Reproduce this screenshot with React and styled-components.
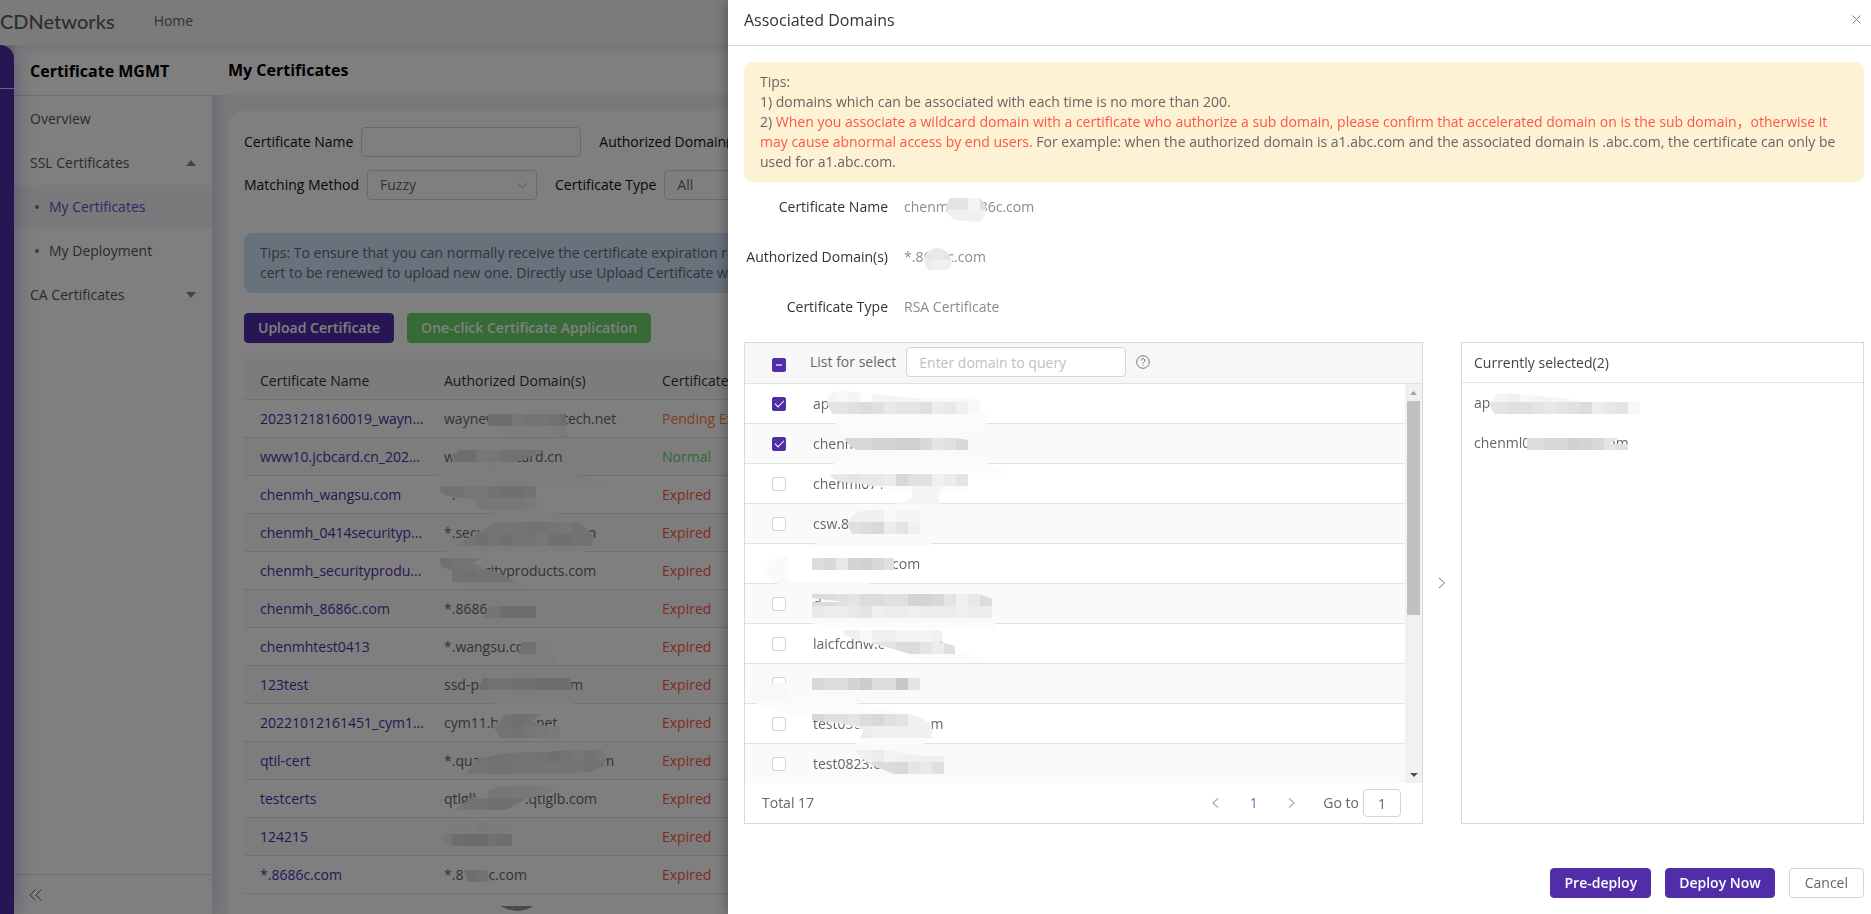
import React, { useEffect, useId, useRef } from "react";
import styled, { createGlobalStyle } from "styled-components";

const GlobalStyle = createGlobalStyle`
  *,
  *::before,
  *::after {
    box-sizing: border-box;
  }
  body {
    margin: 0;
    overflow: hidden;
    background-color: #f3f3f8;
  }
  body,
  button,
  input,
  select {
    font-family: "Open Sans", "Noto Sans CJK SC", sans-serif;
    font-size: 14px;
    line-height: 20px;
    color: #666666;
  }
`;

/* ---------- page behind the drawer ---------- */

const Page = styled.div`
  height: 100vh;
  display: flex;
  flex-direction: column;
  overflow: hidden;
`;

const TopBar = styled.header`
  height: 45px;
  flex: none;
  display: flex;
  align-items: center;
  gap: 39px;
  padding-bottom: 4px;
  background-color: #f7f7f9;
  box-shadow: 0 2px 12px rgba(0, 0, 0, 0.12);
  position: relative;
  z-index: 2;
`;

const Logo = styled.a`
  font-family: Lato, sans-serif;
  font-size: 20px;
  font-weight: 500;
  line-height: 24px;
  color: #5c5c5c;
  text-decoration: none;
`;

const TopLink = styled.a`
  color: #666666;
  text-decoration: none;
`;

const Columns = styled.div`
  flex: 1;
  min-height: 0;
  display: flex;
`;

const Rail = styled.div`
  width: 14px;
  flex: none;
  padding-top: 43px;
  background-color: #512da8;
  border-radius: 0 14px 0 0;
  box-shadow: 0 0 20px rgba(81, 45, 168, 0.45);
  position: relative;
  z-index: 1;
`;

const RailLine = styled.div`
  height: 1px;
  background-color: #d8cfee;
`;

const Sidebar = styled.aside`
  width: 198px;
  flex: none;
  display: flex;
  flex-direction: column;
  background-color: #ffffff;
  box-shadow: 0 0 20px rgba(60, 40, 100, 0.22);
`;

const SidebarTitle = styled.h2`
  height: 51px;
  margin: 0;
  padding: 0 16px;
  border-bottom: 1px solid #dcdcdc;
  font-size: 16px;
  font-weight: 700;
  line-height: 52px;
  color: #000000;
`;

const Menu = styled.ul`
  flex: 1;
  list-style: none;
  margin: 0;
  padding: 1px 0 0;
`;

const MenuLink = styled.a`
  height: 44px;
  display: flex;
  align-items: center;
  justify-content: space-between;
  padding: 0 16px;
  color: #555555;
  text-decoration: none;
`;

const SubMenuLink = styled.a`
  height: 44px;
  display: flex;
  align-items: center;
  gap: 10px;
  padding-left: 21px;
  color: ${(props) => (props.$active ? "#6a4bc4" : "#555555")};
  background-color: ${(props) => (props.$active ? "#f4f3f9" : "transparent")};
  text-decoration: none;

  &::before {
    content: "";
    width: 4px;
    height: 4px;
    border-radius: 50%;
    background-color: #777777;
  }
`;

const Collapse = styled.button`
  height: 40px;
  padding: 2px 0 0 15px;
  border: 0;
  border-top: 1px solid #dcdcdc;
  background: none;
  text-align: left;
`;

const Main = styled.main`
  flex: 1;
  min-width: 0;
  display: flex;
  flex-direction: column;
`;

const MainTitle = styled.h1`
  height: 50px;
  flex: none;
  margin: 0;
  padding: 0 16px;
  background-color: #ffffff;
  font-size: 16px;
  font-weight: 700;
  line-height: 50px;
  color: #000000;
`;

const Card = styled.section`
  flex: 1;
  min-height: 0;
  margin: 16px 16px 0;
  padding: 16px;
  border-radius: 16px 16px 0 0;
  background-color: #ffffff;
  overflow: hidden;
`;

const Filters = styled.form`
  display: flex;
  flex-direction: column;
  gap: 13px;
`;

const FilterRow = styled.div`
  display: flex;
  gap: 18px;
`;

const Field = styled.label`
  display: flex;
  align-items: center;
  gap: 8px;
  color: #111111;
  white-space: nowrap;
`;

const TextBox = styled.input`
  width: 220px;
  height: 30px;
  padding: 0 12px;
  border: 1px solid #d5d5d5;
  border-radius: 4px;
  background-color: #ffffff;

  &::placeholder {
    color: #bfbfbf;
  }
`;

const SelectBox = styled.span`
  display: grid;
  align-items: center;

  > * {
    grid-area: 1 / 1;
  }
  > svg {
    justify-self: end;
    margin-right: 9px;
    pointer-events: none;
  }
`;

const Select = styled.select`
  width: 170px;
  height: 30px;
  padding: 0 12px;
  appearance: none;
  border: 1px solid #d5d5d5;
  border-radius: 4px;
  background-color: #ffffff;
`;

const BlueTips = styled.p`
  margin: 33px 0 20px;
  padding: 10px 16px;
  border-radius: 8px;
  background-color: #cfe4fb;
  white-space: nowrap;
  overflow: hidden;
`;

const Actions = styled.div`
  display: flex;
  gap: 13px;
  margin-bottom: 16px;
`;

const Button = styled.button`
  height: 30px;
  padding: 0 ${(props) => (props.$plain ? 15 : 13)}px;
  border: 1px solid ${(props) => (props.$plain ? "#d5d5d5" : props.$color || "#512da8")};
  border-radius: 4px;
  background-color: ${(props) => (props.$plain ? "#ffffff" : props.$color || "#512da8")};
  color: ${(props) => (props.$plain ? "#666666" : "#ffffff")};
  font-weight: ${(props) => (props.$plain ? 400 : 600)};
  line-height: 28px;
  white-space: nowrap;
  cursor: pointer;
`;

const Covered = styled.div`
  position: relative;
`;

const Table = styled.table`
  width: 100%;
  table-layout: fixed;
  border-collapse: separate;
  border-spacing: 0;

  th,
  td {
    height: 38px;
    padding: 0 0 0 16px;
    border-bottom: 1px solid #e2e2e2;
    text-align: left;
    font-weight: 400;
    white-space: nowrap;
  }
  th {
    height: 41px;
    padding-top: 3px;
    background-color: #f9f9f9;
    color: #333333;
  }
  tbody tr:nth-child(even) {
    background-color: #fbfbfb;
  }
  a {
    color: #512da8;
    text-decoration: none;
  }
`;

const Status = styled.span`
  color: ${(props) => props.$color};
`;

const Gap = styled.span`
  display: inline-block;
  width: ${(props) => props.$width}px;
`;

const Backdrop = styled.div`
  position: fixed;
  inset: 0;
  z-index: 10;
  background-color: rgba(0, 0, 0, 0.5);
`;

/* ---------- drawer ---------- */

const Drawer = styled.div`
  position: fixed;
  inset: 0 0 0 728px;
  z-index: 11;
  display: flex;
  flex-direction: column;
  background-color: #ffffff;
  box-shadow: -2px 0 12px rgba(0, 0, 0, 0.3);
`;

const DrawerHead = styled.header`
  height: 46px;
  flex: none;
  display: flex;
  align-items: center;
  justify-content: space-between;
  padding: 0 10px 6px 16px;
  border-bottom: 1px solid #d9d9d9;
`;

const DrawerTitle = styled.h2`
  margin: 0;
  font-size: 16px;
  font-weight: 400;
  line-height: 22px;
  color: #333333;
`;

const IconButton = styled.button`
  display: flex;
  align-items: center;
  justify-content: center;
  padding: 0;
  border: 0;
  background: none;
  cursor: pointer;
`;

const DrawerBody = styled.div`
  flex: 1;
  min-height: 0;
  padding: 16px 7px 0 16px;
`;

const Tips = styled.div`
  padding: 10px 16px;
  border-radius: 8px;
  background-color: #fef2d5;
`;

const Warning = styled.span`
  color: #ff5643;
`;

const Details = styled.dl`
  display: grid;
  grid-template-columns: 144px 1fr;
  grid-auto-rows: 50px;
  column-gap: 16px;
  margin: 0 0 10px;
  line-height: 50px;
`;

const Term = styled.dt`
  text-align: right;
  color: #333333;
`;

const Value = styled.dd`
  margin: 0;
  color: #8c8c8c;
  position: relative;
`;

const Transfer = styled.div`
  display: grid;
  grid-template-columns: minmax(0, 1fr) 38px 403px;
`;

const Panel = styled.section`
  display: flex;
  flex-direction: column;
  border: 1px solid #d9d9d9;
  position: relative;
`;

const ListHead = styled.div`
  height: 41px;
  display: flex;
  align-items: center;
  padding: 0 0 2px 27px;
  border-bottom: 1px solid #e2e2e2;
  background-color: #f7f7f7;
`;

const SearchLabel = styled.label`
  margin: 0 10px 0 24px;
`;

const SearchBox = styled(TextBox)`
  margin-right: 10px;
`;

const HeadCheck = styled.span`
  display: flex;
  padding-top: 6px;
`;

const Check = styled.input`
  appearance: none;
  width: 14px;
  height: 14px;
  flex: none;
  display: grid;
  place-items: center;
  margin: 0;
  border: 1px solid #d5d5d5;
  border-radius: 2px;
  background-color: #ffffff;

  &:checked,
  &:indeterminate {
    border-color: #512da8;
    background-color: #512da8;
  }
  &:checked::after {
    content: "";
    width: 5px;
    height: 9px;
    margin-bottom: 2px;
    border: solid #ffffff;
    border-width: 0 1px 1px 0;
    transform: rotate(45deg);
  }
  &:indeterminate::after {
    content: "";
    width: 6px;
    height: 2px;
    background-color: #b9abdc;
  }
`;

const ListBody = styled.div`
  display: flex;
`;

const Rows = styled.ul`
  flex: 1;
  list-style: none;
  margin: 0;
  padding: 0;
`;

const Row = styled.li`
  label {
    height: 40px;
    display: flex;
    align-items: center;
    gap: 27px;
    padding-left: 27px;
    border-bottom: 1px solid #e2e2e2;
  }
  &:nth-child(even) {
    background-color: #fafafa;
  }
  &:last-child label {
    height: 39px;
    border-bottom: 0;
  }
`;

const NoCheck = styled.span`
  width: 14px;
`;

const ScrollTrack = styled.div`
  width: 17px;
  display: flex;
  flex-direction: column;
  align-items: center;
  padding: 7px 0 6px;
  background-color: #f1f1f1;
`;

const ScrollThumb = styled.div`
  width: 13px;
  height: 214px;
  margin: 6px 0 auto;
  background-color: #c1c1c1;
`;

const ListFoot = styled.div`
  height: 40px;
  display: flex;
  align-items: center;
  padding: 0 21px 0 17px;
`;

const Pager = styled.nav`
  display: flex;
  align-items: center;
  margin-left: auto;
  gap: 29px;
  padding-right: 27px;
`;

const PageLink = styled.a`
  width: 9px;
  text-align: center;
  color: #7d5fc7;
  text-decoration: none;
`;

const GoTo = styled.label`
  display: flex;
  align-items: center;
  gap: 4px;
`;

const PageBox = styled.input`
  width: 38px;
  height: 28px;
  padding: 0;
  border: 1px solid #d5d5d5;
  border-radius: 4px;
  text-align: center;
`;

const Move = styled.div`
  display: flex;
  align-items: center;
  justify-content: center;
`;

const SelectedTitle = styled.h3`
  height: 40px;
  margin: 0;
  padding: 0 12px;
  border-bottom: 1px solid #e2e2e2;
  font-size: 14px;
  font-weight: 400;
  line-height: 40px;
  color: #444444;
`;

const SelectedItem = styled.div`
  height: 40px;
  padding: 0 12px;
  line-height: 40px;
`;

const DrawerFoot = styled.footer`
  display: flex;
  justify-content: flex-end;
  gap: 14px;
  padding: 16px 7px 16px 16px;
`;

/* ---------- small drawings ---------- */

const Chevron = ({ d, w = 8, h = 12, color = "#888888", stroke = 1 }) => (
  <svg width={w} height={h} viewBox={`0 0 ${w} ${h}`} fill="none" stroke={color} strokeWidth={stroke} aria-hidden="true">
    <path d={d} />
  </svg>
);

const Caret = ({ up, w = 10, h = 6, color = "#888888" }) => (
  <svg width={w} height={h} aria-hidden="true">
    <path d={up ? `M0 ${h}L${w / 2} 0L${w} ${h}Z` : `M0 0H${w}L${w / 2} ${h}Z`} fill={color} />
  </svg>
);

const HelpIcon = () => (
  <svg width="14" height="14" viewBox="0 0 14 14" fill="none" stroke="#777777" aria-label="Help">
    <circle cx="7" cy="7" r="6.3" />
    <path d="M5.1 5.5a1.9 1.9 0 1 1 2.8 1.7c-.6.3-.9.6-.9 1.3" />
    <path d="M7 9.6v1.1" />
  </svg>
);

const Cover = styled.svg`
  position: absolute;
  left: ${(props) => props.$left || 0}px;
  top: ${(props) => props.$top || 0}px;
  overflow: visible;
  pointer-events: none;
`;

const CELL = 12;
const gray = (c) => {
  const v = 192 + 4 * parseInt(c, 16);
  return `rgb(${v}, ${v}, ${v})`;
};

// Pixelated strokes hiding parts of domain names. Each band is
// [column, row, shades], one hex digit of lightness per cell.
const Mosaic = ({ strokes, ox = 0, oy = 0, left, top }) => {
  const id = useId();
  return (
    <Cover width="1" height="1" $left={left} $top={top} aria-hidden="true">
      {strokes.map(({ d, fill = "#fbfbfb", bands = [] }, i) => (
        <g key={i} clipPath={`url(#${id}-${i})`}>
          <clipPath id={`${id}-${i}`}>
            <path d={d} />
          </clipPath>
          <path d={d} fill={fill} />
          {bands.map(([col, row, shades]) =>
            [...shades].map((c, n) => (
              <rect
                key={`${row}-${n}`}
                x={ox + (col + n) * CELL}
                y={oy + row * CELL}
                width={CELL}
                height={CELL}
                fill={gray(c)}
                shapeRendering="crispEdges"
              />
            ))
          )}
        </g>
      ))}
    </Cover>
  );
};

const tableStrokes = [
  { d: "M244 55H321L323 67V78H268L256 70L244 67Z", bands: [[20, 4, "77baa97"], [25, 5, "ed"]] },
  { d: "M215 91H299L290 96L273 103L256 115H244V103H208L207 98Z", bands: [[17, 7, "77bb9889"], [20, 8, "e"]] },
  {
    d: "M194 116H333L360 124V127H292V139L300 151L314 155H250L236 149L212 139L196 133Z",
    bands: [[16, 10, "99bb9889"], [19, 11, "bcccd"]],
  },
  {
    d: "M252 163H335L349 175L348 187L340 193H202L209 187L225 179Z",
    bands: [[19, 13, "aaaa99ab9a"], [17, 14, "ba8a8aab8899"]],
  },
  {
    d: "M196 199H240L229 204L245 211L256 214L272 223L285 229H232L208 223V211L197 208Z",
    bands: [[16, 16, "8aab"], [17, 17, "989989"]],
  },
  { d: "M246 247H292V259L310 268H241L239 259Z", bands: [[19, 20, "aa777d"]] },
  { d: "M278 283H305L313 305H280L274 295Z", bands: [[22, 23, "88"]] },
  { d: "M238 319H326L329 331V345H250L262 331H235Z", bands: [[19, 26, "79988777"]] },
  { d: "M262 355H298L289 362L300 367H316V379H256L249 367Z", bands: [[20, 29, "b989a"], [20, 30, "9a9bcd"]] },
  {
    d: "M230 401L260 394L300 393L322 391H358L363 398L360 407L345 413L310 415H223Z",
    bands: [[18, 32, "9999aa98ab9b"], [18, 33, "aa99aaaaaa999"]],
  },
  {
    d: "M256 427H316V432L290 438L276 443L262 451H209L226 440Z",
    bands: [[20, 35, "bbccde"], [17, 36, "b99888"]],
  },
  { d: "M205 463H270V487H206L199 480L202 470Z", bands: [[16, 38, "eeedee"], [16, 39, "b76687"]] },
  { d: "M220 511H244V518L250 523H224Z", bands: [[18, 42, "79d"]] },
  { d: "M256 547H290Q273 557 256 547", fill: "#969696" },
];

const listStrokes = [
  {
    d: "M83 58Q90 46 100 49L130 52L170 56H224L236 60V72L245 72L242 83H92L90 73Q83 66 83 58Z",
    bands: [[6, 4, "dedfddddeeeeef"], [6, 5, "99878a998bace"]],
  },
  { d: "M100 96H212L224 98V108H112Q104 103 100 96Z", bands: [[7, 8, "66655446986"]] },
  { d: "M90 120H240L265 131H86Z" },
  {
    d: "M86 132H224V148H150L118 142L98 140Q88 138 86 132Z",
    bands: [[6, 11, "aa9aab688cb9"]],
  },
  { d: "M152 162L168 156V144H200L195 150V162Z", fill: "#f5f5f5" },
  { d: "M104 180Q110 168 126 168H176V192H108Q104 186 104 180Z", bands: [[8, 14, "cccedd"], [8, 15, "876b9c"]] },
  { d: "M64 204L90 195H187V204Z", fill: "#f9f9f9" },
  { d: "M20 230Q24 215 44 213V240H30Z", fill: "#fafafa" },
  { d: "M68 216H150V228H68Z", bands: [[5, 18, "76a5468"]] },
  { d: "M28 240H120L170 252H68Z", fill: "#f9f9f9" },
  {
    d: "M68 252H235L248 257V276H68V260L100 260L68 256Z",
    bands: [[5, 21, "778977885569ca7"], [5, 22, "abba9cbbcbbbcbb"]],
  },
  { d: "M66 281L90 286H240L250 287L251 281Z" },
  {
    d: "M98 288H197Q201 296 196 300L211 304V312H166L142 305L112 298Q100 294 98 288Z",
    bands: [[7, 24, "cceccdddcd"], [10, 25, "99779b8e"]],
  },
  { d: "M150 309L165 312L225 312L247 321H188Z" },
  { d: "M68 336H176V348H68Z", bands: [[5, 28, "677537729"]] },
  { d: "M4 350Q10 344 30 341H44V360H10Z", fill: "#f8f8f8" },
  { d: "M10 361H112L165 372L68 372H44Z", fill: "#fcfcfc" },
  {
    d: "M68 372H165Q182 376 188 384L188 397L180 402H112L120 388L100 382L68 378Z",
    bands: [[5, 31, "68897689cc"], [9, 32, "bcccccdd"]],
  },
  {
    d: "M112 408H150Q160 414 200 414V432H150L130 424Q114 416 112 408Z",
    bands: [[8, 34, "bcbdcccc"], [9, 35, "97769a86"]],
  },
];

const selectedStrokes = [
  {
    d: "M30 60Q32 51 44 51L100 56L130 60H179V72H34Q28 66 30 60Z",
    bands: [[1, 4, "ddceddde"], [1, 5, "99889a987ba9e"]],
  },
  { d: "M66 96H158L148 102H167V108H66Z", bands: [[4, 8, "776645698"]] },
];

const nameStrokes = [{ d: "M46 16H76Q84 24 81 34L76 40L52 38Q36 30 46 16Z", bands: [[3, 1, "99d88"], [3, 2, "cccdf"]] }];
const domainStrokes = [{ d: "M20 26Q24 16 34 16Q44 17 48 29Q47 35 43 38H25Q20 34 20 26Z", bands: [[1, 1, "aa9a"], [1, 2, "bccc"]] }];

/* ---------- data ---------- */

const EXPIRED = ["Expired", "#ff5643"];

const certificates = [
  { name: "20231218160019_wayn...", domain: ["waynew", 66, "tech.net"], status: ["Pending Expiration", "#ff7d3c"] },
  { name: "www10.jcbcard.cn_202...", domain: ["w", 60, "card.cn"], status: ["Normal", "#62cc6a"] },
  { name: "chenmh_wangsu.com", domain: ["*."], status: EXPIRED },
  { name: "chenmh_0414securityp...", domain: ["*.secu", 98, "m"], status: EXPIRED },
  { name: "chenmh_securityprodu...", domain: ["", 41, "rityproducts.com"], status: EXPIRED },
  { name: "chenmh_8686c.com", domain: ["*.8686"], status: EXPIRED },
  { name: "chenmhtest0413", domain: ["*.wangsu.co"], status: EXPIRED },
  { name: "123test", domain: ["ssd-p", 91, "m"], status: EXPIRED },
  { name: "20221012161451_cym1...", domain: ["cym11.h", 37, "net"], status: EXPIRED },
  { name: "qtil-cert", domain: ["*.qua", 121, "m"], status: EXPIRED },
  { name: "testcerts", domain: ["qtlglb", 44, ".qtlglb.com"], status: EXPIRED },
  { name: "124215", domain: [""], status: EXPIRED },
  { name: "*.8686c.com", domain: ["*.8", 25, "c.com"], status: EXPIRED },
];

const domains = [
  { text: ["ap"], checked: true },
  { text: ["chenm"], checked: true },
  { text: ["chenml0711"] },
  { text: ["csw.8"] },
  { text: ["", 79, "com"], hidden: true },
  { text: ["d"] },
  { text: ["laicfcdnw.c", 51, "o"] },
  { text: [""] },
  { text: ["test050", 69, "m"] },
  { text: ["test0823.c"] },
];

const Redacted = ({ parts: [before, width, after] }) => (
  <span>
    {before}
    {width && <Gap $width={width} />}
    {after}
  </span>
);

const SelectAll = () => {
  const ref = useRef(null);
  useEffect(() => {
    ref.current.indeterminate = true;
  }, []);
  return <Check type="checkbox" ref={ref} aria-label="Select all domains" />;
};

const Dropdown = ({ label, options }) => (
  <Field>
    {label}
    <SelectBox>
      <Select>
        {options.map((option) => (
          <option key={option}>{option}</option>
        ))}
      </Select>
      <Chevron w={11} h={7} d="M0.5 1L5.5 6L10.5 1" color="#bbbbbb" />
    </SelectBox>
  </Field>
);

const CertificatesPage = () => (
  <Page>
    <TopBar>
      <Logo href="#">CDNetworks</Logo>
      <TopLink href="#">Home</TopLink>
    </TopBar>
    <Columns>
      <Rail>
        <RailLine />
      </Rail>
      <Sidebar>
        <SidebarTitle>Certificate MGMT</SidebarTitle>
        <Menu>
          <li>
            <MenuLink href="#">Overview</MenuLink>
          </li>
          <li>
            <MenuLink href="#">
              SSL Certificates <Caret up />
            </MenuLink>
          </li>
          <li>
            <SubMenuLink href="#" $active>
              My Certificates
            </SubMenuLink>
          </li>
          <li>
            <SubMenuLink href="#">My Deployment</SubMenuLink>
          </li>
          <li>
            <MenuLink href="#">
              CA Certificates <Caret />
            </MenuLink>
          </li>
        </Menu>
        <Collapse aria-label="Collapse menu">
          <Chevron w={13} h={12} d="M6.5 0.5L1 6L6.5 11.5M12.5 0.5L7 6L12.5 11.5" color="#666666" />
        </Collapse>
      </Sidebar>
      <Main>
        <MainTitle>My Certificates</MainTitle>
        <Card>
          <Filters>
            <FilterRow>
              <Field>
                Certificate Name
                <TextBox type="text" />
              </Field>
              <Field>
                Authorized Domain(s)
                <TextBox type="text" />
              </Field>
            </FilterRow>
            <FilterRow>
              <Dropdown label="Matching Method" options={["Fuzzy", "Exact"]} />
              <Dropdown label="Certificate Type" options={["All"]} />
            </FilterRow>
          </Filters>
          <BlueTips>
            Tips: To ensure that you can normally receive the certificate expiration reminder
            <br />
            cert to be renewed to upload new one. Directly use Upload Certificate will
          </BlueTips>
          <Actions>
            <Button>Upload Certificate</Button>
            <Button $color="#6cd66e">One-click Certificate Application</Button>
          </Actions>
          <Covered>
            <Table>
              <colgroup>
                <col width="184" />
                <col width="218" />
                <col />
              </colgroup>
              <thead>
                <tr>
                  <th>Certificate Name</th>
                  <th>Authorized Domain(s)</th>
                  <th>Certificate Status</th>
                </tr>
              </thead>
              <tbody>
                {certificates.map(({ name, domain, status }) => (
                  <tr key={name}>
                    <td>
                      <a href="#">{name}</a>
                    </td>
                    <td>
                      <Redacted parts={domain} />
                    </td>
                    <td>
                      <Status $color={status[1]}>{status[0]}</Status>
                    </td>
                  </tr>
                ))}
              </tbody>
            </Table>
            <Mosaic strokes={tableStrokes} ox={4} oy={7} />
          </Covered>
        </Card>
      </Main>
    </Columns>
  </Page>
);

const DomainsDrawer = () => (
  <Drawer role="dialog" aria-label="Associated Domains">
    <DrawerHead>
      <DrawerTitle>Associated Domains</DrawerTitle>
      <IconButton aria-label="Close">
        <Chevron w={9} h={9} d="M0.5 0.5L8.5 8.5M8.5 0.5L0.5 8.5" color="#888888" />
      </IconButton>
    </DrawerHead>
    <DrawerBody>
      <Tips>
        Tips:
        <br />
        1) domains which can be associated with each time is no more than 200.
        <br />
        2){" "}
        <Warning>
          When you associate a wildcard domain with a certificate who authorize a sub domain, please confirm that
          accelerated domain on is the sub domain，otherwise it may cause abnormal access by end users.
        </Warning>{" "}
        For example: when the authorized domain is a1.abc.com and the associated domain is .abc.com, the certificate can
        only be used for a1.abc.com.
      </Tips>
      <Details>
        <Term>Certificate Name</Term>
        <Value>
          <Redacted parts={["chenm", 31, "86c.com"]} />
          <Mosaic strokes={nameStrokes} ox={4} oy={4} />
        </Value>
        <Term>Authorized Domain(s)</Term>
        <Value>
          <Redacted parts={["*.86", 16, "c.com"]} />
          <Mosaic strokes={domainStrokes} ox={4} oy={4} />
        </Value>
        <Term>Certificate Type</Term>
        <Value>RSA Certificate</Value>
      </Details>
      <Transfer>
        <Panel>
          <ListHead>
            <HeadCheck>
              <SelectAll />
            </HeadCheck>
            <SearchLabel htmlFor="domain-query">List for select</SearchLabel>
            <SearchBox id="domain-query" type="text" placeholder="Enter domain to query" />
            <HelpIcon />
          </ListHead>
          <ListBody>
            <Rows>
              {domains.map(({ text, checked, hidden }, i) => (
                <Row key={i}>
                  <label>
                    {hidden ? <NoCheck /> : <Check type="checkbox" defaultChecked={checked} />}
                    <Redacted parts={text} />
                  </label>
                </Row>
              ))}
            </Rows>
            <ScrollTrack>
              <Caret up w={7} h={4} color="#a3a3a3" />
              <ScrollThumb />
              <Caret w={8} h={4} color="#505050" />
            </ScrollTrack>
          </ListBody>
          <ListFoot>
            Total 17
            <Pager aria-label="Pages">
              <IconButton aria-label="Previous page">
                <Chevron w={9} h={10} d="M7 0.5L2 5L7 9.5" color="#b5b5b5" stroke={1.5} />
              </IconButton>
              <PageLink href="#">1</PageLink>
              <IconButton aria-label="Next page">
                <Chevron w={9} h={10} d="M2 0.5L7 5L2 9.5" color="#b5b5b5" stroke={1.5} />
              </IconButton>
            </Pager>
            <GoTo>
              Go to
              <PageBox type="text" defaultValue="1" />
            </GoTo>
          </ListFoot>
          <Mosaic strokes={listStrokes} ox={8} left={-1} top={-1} />
        </Panel>
        <Move>
          <IconButton aria-label="Move to selected">
            <Chevron d="M1 1L6.5 6L1 11" color="#777777" />
          </IconButton>
        </Move>
        <Panel>
          <SelectedTitle>Currently selected(2)</SelectedTitle>
          <SelectedItem>ap</SelectedItem>
          <SelectedItem>
            <Redacted parts={["chenml0", 77, "om"]} />
          </SelectedItem>
          <Mosaic strokes={selectedStrokes} ox={11} left={-1} top={-1} />
        </Panel>
      </Transfer>
    </DrawerBody>
    <DrawerFoot>
      <Button>Pre-deploy</Button>
      <Button>Deploy Now</Button>
      <Button $plain>Cancel</Button>
    </DrawerFoot>
  </Drawer>
);

const App = () => {
  return (
    <>
      <GlobalStyle />
      <CertificatesPage />
      <Backdrop />
      <DomainsDrawer />
    </>
  );
};

export default App;
